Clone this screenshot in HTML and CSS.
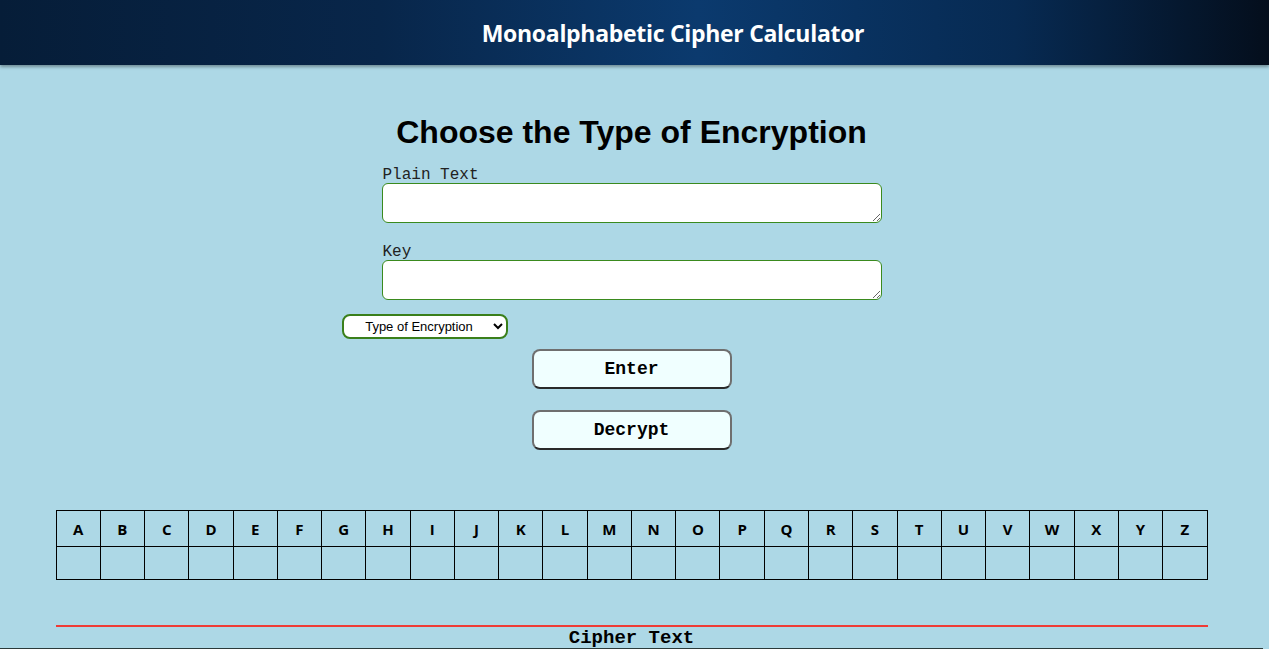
FILE: index.html
```html
<!DOCTYPE html>
<html>
<head>
<meta charset="utf-8">
<link rel="stylesheet" href="styles.css">
</head>
<body>
<header class="topbar"><h1 class="brand">Monoalphabetic Cipher Calculator</h1></header>
<main class="main">
  <h2 class="title">Choose the Type of Encryption</h2>
  <div class="form">
    <label class="label">Plain Text</label>
    <textarea class="field"></textarea>
    <label class="label key">Key</label>
    <textarea class="field"></textarea>
  </div>
  <div class="select-row">
    <select class="select"><option>Type of Encryption</option></select>
  </div>
  <div class="buttons">
    <button class="btn">Enter</button>
    <button class="btn">Decrypt</button>
  </div>
  <table class="alpha">
    <tr><th>A</th><th>B</th><th>C</th><th>D</th><th>E</th><th>F</th><th>G</th><th>H</th><th>I</th><th>J</th><th>K</th><th>L</th><th>M</th><th>N</th><th>O</th><th>P</th><th>Q</th><th>R</th><th>S</th><th>T</th><th>U</th><th>V</th><th>W</th><th>X</th><th>Y</th><th>Z</th></tr>
    <tr><td></td><td></td><td></td><td></td><td></td><td></td><td></td><td></td><td></td><td></td><td></td><td></td><td></td><td></td><td></td><td></td><td></td><td></td><td></td><td></td><td></td><td></td><td></td><td></td><td></td><td></td></tr>
  </table>
  <div class="rule"></div>
  <div class="cipher-label">Cipher Text</div>
  <div class="cipher-box"></div>
</main>
</body>
</html>
```
FILE: styles.css
```css
html, body { margin: 0; padding: 0; }
body {
  background: #add8e6;
  font-family: "Liberation Sans", Arial, sans-serif;
  overflow: hidden;
  height: 649px;
}
.topbar {
  height: 65px;
  background: linear-gradient(90deg, #061d38 0%, #08264a 30%, #0b3a6e 55%, #072a52 80%, #040e1c 100%);
  display: flex;
  align-items: center;
  justify-content: center;
  box-shadow: 0 2px 3px rgba(0,0,0,0.35);
  position: relative;
}
.brand {
  margin: 0 0 0 77px;
  color: #fff;
  font-family: "Open Sans", sans-serif;
  font-weight: 700;
  font-size: 23px;
  letter-spacing: -0.3px;
}
.main {
  display: flex;
  flex-direction: column;
  align-items: center;
  padding-top: 49px;
  padding-right: 6px;
}
.title {
  margin: 0;
  font-family: "Liberation Sans", Arial, sans-serif;
  font-weight: 700;
  font-size: 32px;
  line-height: 37px;
  color: #000;
}
.form {
  width: 500px;
  display: flex;
  flex-direction: column;
  margin-top: 16px;
}
.label {
  font-family: "Liberation Mono", "Courier New", monospace;
  font-size: 16px;
  line-height: 16px;
  color: #222;
  margin-left: 1px;
}
.label.key { margin-top: 21px; }
.field {
  box-sizing: border-box;
  width: 500px;
  height: 40px;
  margin: 0;
  border: 1px solid #3a8a1e;
  border-radius: 6px;
  background: #fff;
  display: block;
}
.select-row {
  width: 100%;
  display: flex;
  margin-top: 14px;
  padding-left: 342px;
  box-sizing: border-box;
}
.select {
  box-sizing: border-box;
  width: 166px;
  height: 25px;
  border: 2px solid #3a7f1b;
  border-radius: 8px;
  background: #fff;
  font-family: "Liberation Sans", Arial, sans-serif;
  font-size: 13px;
  color: #000;
  text-align: center;
  padding: 0 4px;
}
.buttons {
  display: flex;
  flex-direction: column;
  gap: 21px;
  margin-top: 10px;
}
.btn {
  box-sizing: border-box;
  width: 200px;
  height: 40px;
  background: #f0ffff;
  border: 2px solid #6f6f6f;
  border-bottom-color: #2a2a2a;
  border-radius: 8px;
  font-family: "Liberation Mono", "Courier New", monospace;
  font-weight: 700;
  font-size: 18px;
  color: #000;
  padding: 0;
}
.alpha {
  margin-top: 60px;
  width: 1152px;
  border-collapse: collapse;
  table-layout: fixed;
}
.alpha th, .alpha td {
  border: 1px solid #000;
  padding: 0;
  text-align: center;
}
.alpha th {
  height: 35px;
  font-family: "Open Sans", sans-serif;
  font-weight: 700;
  font-size: 15px;
  color: #000;
}
.alpha td { height: 32px; }
.rule {
  width: 1152px;
  height: 2px;
  background: #ef3b36;
  margin-top: 45px;
}
.cipher-label {
  font-family: "Liberation Mono", "Courier New", monospace;
  font-weight: 700;
  font-size: 19px;
  line-height: 20px;
  color: #000;
  margin-top: 1px;
}
.cipher-box {
  width: 100%;
  height: 0;
  border-top: 1px solid #2b3a3a;
}
```
